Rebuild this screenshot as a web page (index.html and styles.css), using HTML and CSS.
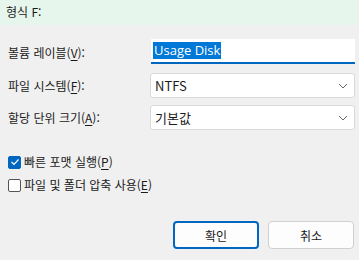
FILE: index.html
```html
<!DOCTYPE html>
<html lang="ko">
<head>
    <meta charset="UTF-8">
    <title>형식 F:</title>
    <link rel="stylesheet" href="styles.css">
</head>
<body>
    <div class="titlebar">형식 F:</div>

    <div class="dialog">
        <div class="row">
            <label class="lbl">볼륨 레이블(<u>V</u>):</label>
            <div class="textbox"><span class="sel">Usage Disk</span></div>
        </div>
        <div class="row">
            <label class="lbl">파일 시스템(<u>F</u>):</label>
            <div class="combo">NTFS
                <svg class="chev" width="10" height="6" viewBox="0 0 10 6"><path d="M1 1l4 4 4-4" fill="none" stroke="#666" stroke-width="1"/></svg>
            </div>
        </div>
        <div class="row">
            <label class="lbl">할당 단위 크기(<u>A</u>):</label>
            <div class="combo">기본값
                <svg class="chev" width="10" height="6" viewBox="0 0 10 6"><path d="M1 1l4 4 4-4" fill="none" stroke="#666" stroke-width="1"/></svg>
            </div>
        </div>

        <div class="checks">
            <div class="check">
                <span class="box on">
                    <svg width="10" height="8" viewBox="0 0 10 8"><path d="M1.5 4l2.5 2.5 4.5-5" fill="none" stroke="#fff" stroke-width="1.2"/></svg>
                </span>
                <span>빠른 포맷 실행(<u>P</u>)</span>
            </div>
            <div class="check">
                <span class="box"></span>
                <span>파일 및 폴더 압축 사용(<u>E</u>)</span>
            </div>
        </div>

        <div class="buttons">
            <button class="btn primary">확인</button>
            <button class="btn">취소</button>
        </div>
    </div>
</body>
</html>
```

FILE: styles.css
```css
body {
    margin: 0;
    background: #f0f0f0;
    font-family: "Noto Sans CJK KR", "Noto Sans", sans-serif;
    font-size: 12px;
    color: #1a1a1a;
}

.titlebar {
    height: 25px;
    line-height: 24px;
    padding-left: 6px;
    background: #e7f6ec;
    font-size: 12px;
}

.dialog {
    padding: 14px 4px 0 8px;
}

.row {
    display: flex;
    align-items: center;
    margin-bottom: 7px;
}

.lbl {
    width: 143px;
}

u {
    text-decoration-thickness: 1px;
    text-underline-offset: 2px;
}

.textbox {
    width: 202px;
    height: 23px;
    background: #fff;
    border-bottom: 2px solid #0067c0;
    display: flex;
    align-items: center;
    padding-left: 2px;
    margin-bottom: 2px;
}

.sel {
    background: #0078d7;
    color: #fff;
    font-family: "Open Sans", "Noto Sans", sans-serif;
    font-size: 13px;
    line-height: 17px;
    padding: 0 1px;
}

.combo {
    position: relative;
    width: 199px;
    height: 23px;
    margin-left: -1px;
    background: #fff;
    border: 1px solid #d9d9d9;
    border-radius: 3px;
    display: flex;
    align-items: center;
    padding-left: 4px;
    font-size: 13px;
}

.chev {
    position: absolute;
    right: 6px;
    top: 9px;
}

.checks {
    margin-top: 21px;
}

.check {
    display: flex;
    align-items: center;
    gap: 3px;
    height: 22px;
    line-height: 16px;
    margin-bottom: 1px;
}

.box {
    width: 11px;
    height: 11px;
    border: 1px solid #555;
    border-radius: 2px;
    background: #fff;
    display: flex;
    align-items: center;
    justify-content: center;
}

.box.on {
    background: #0067c0;
    border-color: #0067c0;
}

.buttons {
    display: flex;
    justify-content: flex-end;
    gap: 9px;
    margin-top: 25px;
    padding-right: 1px;
}

.btn {
    width: 86px;
    height: 28px;
    background: #fdfdfd;
    border: 1px solid #d0d0d0;
    border-radius: 4px;
    font-family: "Noto Sans CJK KR", sans-serif;
    font-size: 12px;
    color: #1a1a1a;
}

.btn.primary {
    border: 2px solid #0067c0;
}
```
